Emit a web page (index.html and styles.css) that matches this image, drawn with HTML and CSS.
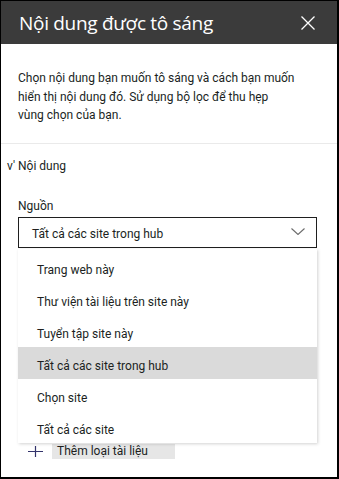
FILE: index.html
```html
<!DOCTYPE html>
<html lang="vi">
<head>
    <meta charset="UTF-8">
    <meta name="viewport" content="width=device-width, initial-scale=1.0">
    <title>Nội dung được tô sáng</title>
    <link rel="stylesheet" href="styles.css">
</head>
<body>
    <div class="panel">
        <!-- Header -->
        <div class="header">
            <h1 class="title">Nội dung được tô sáng</h1>
            <svg class="close" width="14" height="14" viewBox="0 0 14 14">
                <path d="M0.5 0.5L13.5 13.5M13.5 0.5L0.5 13.5" stroke="#ffffff" stroke-width="1.3" fill="none"/>
            </svg>
        </div>
        <p class="desc">Chọn nội dung bạn muốn tô sáng và cách bạn muốn hiển thị nội dung đó. Sử dụng bộ lọc để thu hẹp vùng chọn của bạn.</p>
        <div class="toggle">v' Nội dung</div>
        <!-- Nguồn -->
        <div class="field">
            <div class="label">Nguồn</div>
            <div class="dropdown">
                <span>Tất cả các site trong hub</span>
                <svg class="chevron" width="14" height="7" viewBox="0 0 14 7">
                    <path d="M0.5 0.5L7 6.5L13.5 0.5" stroke="#6b6b6b" stroke-width="1.1" fill="none"/>
                </svg>
            </div>
            <ul class="menu">
                <li>Trang web này</li>
                <li>Thư viện tài liệu trên site này</li>
                <li>Tuyển tập site này</li>
                <li class="selected">Tất cả các site trong hub</li>
                <li>Chọn site</li>
                <li>Tất cả các site</li>
            </ul>
        </div>
        <div class="add">
            <svg class="plus" width="15" height="11" viewBox="0 0 15 11">
                <path d="M0 5.5H15M7.5 0V11" stroke="#33336b" stroke-width="1.2" fill="none"/>
            </svg>
            <span class="add-text">Thêm loại tài liệu</span>
        </div>
    </div>
</body>
</html>
```

FILE: styles.css
```css
body {
    margin: 0;
    font-family: Roboto, "Noto Sans", sans-serif;
    font-size: 12px;
    color: #201f1e;
}
.panel {
    position: relative;
    width: 339px;
    height: 479px;
    box-sizing: border-box;
    border: 1px solid #000000;
    border-right-width: 2px;
    border-bottom-width: 2px;
    overflow: hidden;
    background-color: #ffffff;
}
.header {
    height: 43px;
    background-color: #3b3b3b;
    display: flex;
    align-items: center;
    justify-content: space-between;
    padding: 0 22px 0 18px;
}
.title {
    margin: 0;
    font-family: "Open Sans", sans-serif;
    font-size: 19px;
    font-weight: 400;
    color: #ffffff;
    letter-spacing: -0.3px;
}
.desc {
    margin: 0;
    padding: 25px 40px 18px 17px;
    line-height: 18.5px;
    border-bottom: 1px solid #eaeaea;
}
.toggle {
    padding: 13px 6px 0;
    line-height: 18px;
}
.field {
    position: relative;
    padding: 22px 20px 0 17px;
}
.label {
    line-height: 18px;
    margin-bottom: 2px;
}
.dropdown {
    height: 25px;
    border: 1px solid #1f1f1f;
    display: flex;
    align-items: center;
    justify-content: space-between;
    padding: 4px 11px 0 13px;
}
.chevron {
    margin-bottom: 6px;
}
.menu {
    position: absolute;
    left: 17px;
    right: 20px;
    top: 74px;
    margin: 0;
    padding: 2px 0 0;
    list-style: none;
    background-color: #ffffff;
    box-shadow: 1px 1px 3px rgba(0, 0, 0, 0.18);
    z-index: 2;
}
.menu li {
    height: 29px;
    padding-top: 3px;
    line-height: 32px;
    padding-left: 19px;
}
.menu li.selected {
    background-color: #dadada;
}
.add {
    display: flex;
    align-items: center;
    margin-top: 196px;
    padding-left: 27px;
}
.plus {
    margin-right: 9px;
}
.add-text {
    display: block;
    width: 118px;
    padding-left: 5px;
    background-color: #e6e6e6;
    line-height: 15px;
}
```
